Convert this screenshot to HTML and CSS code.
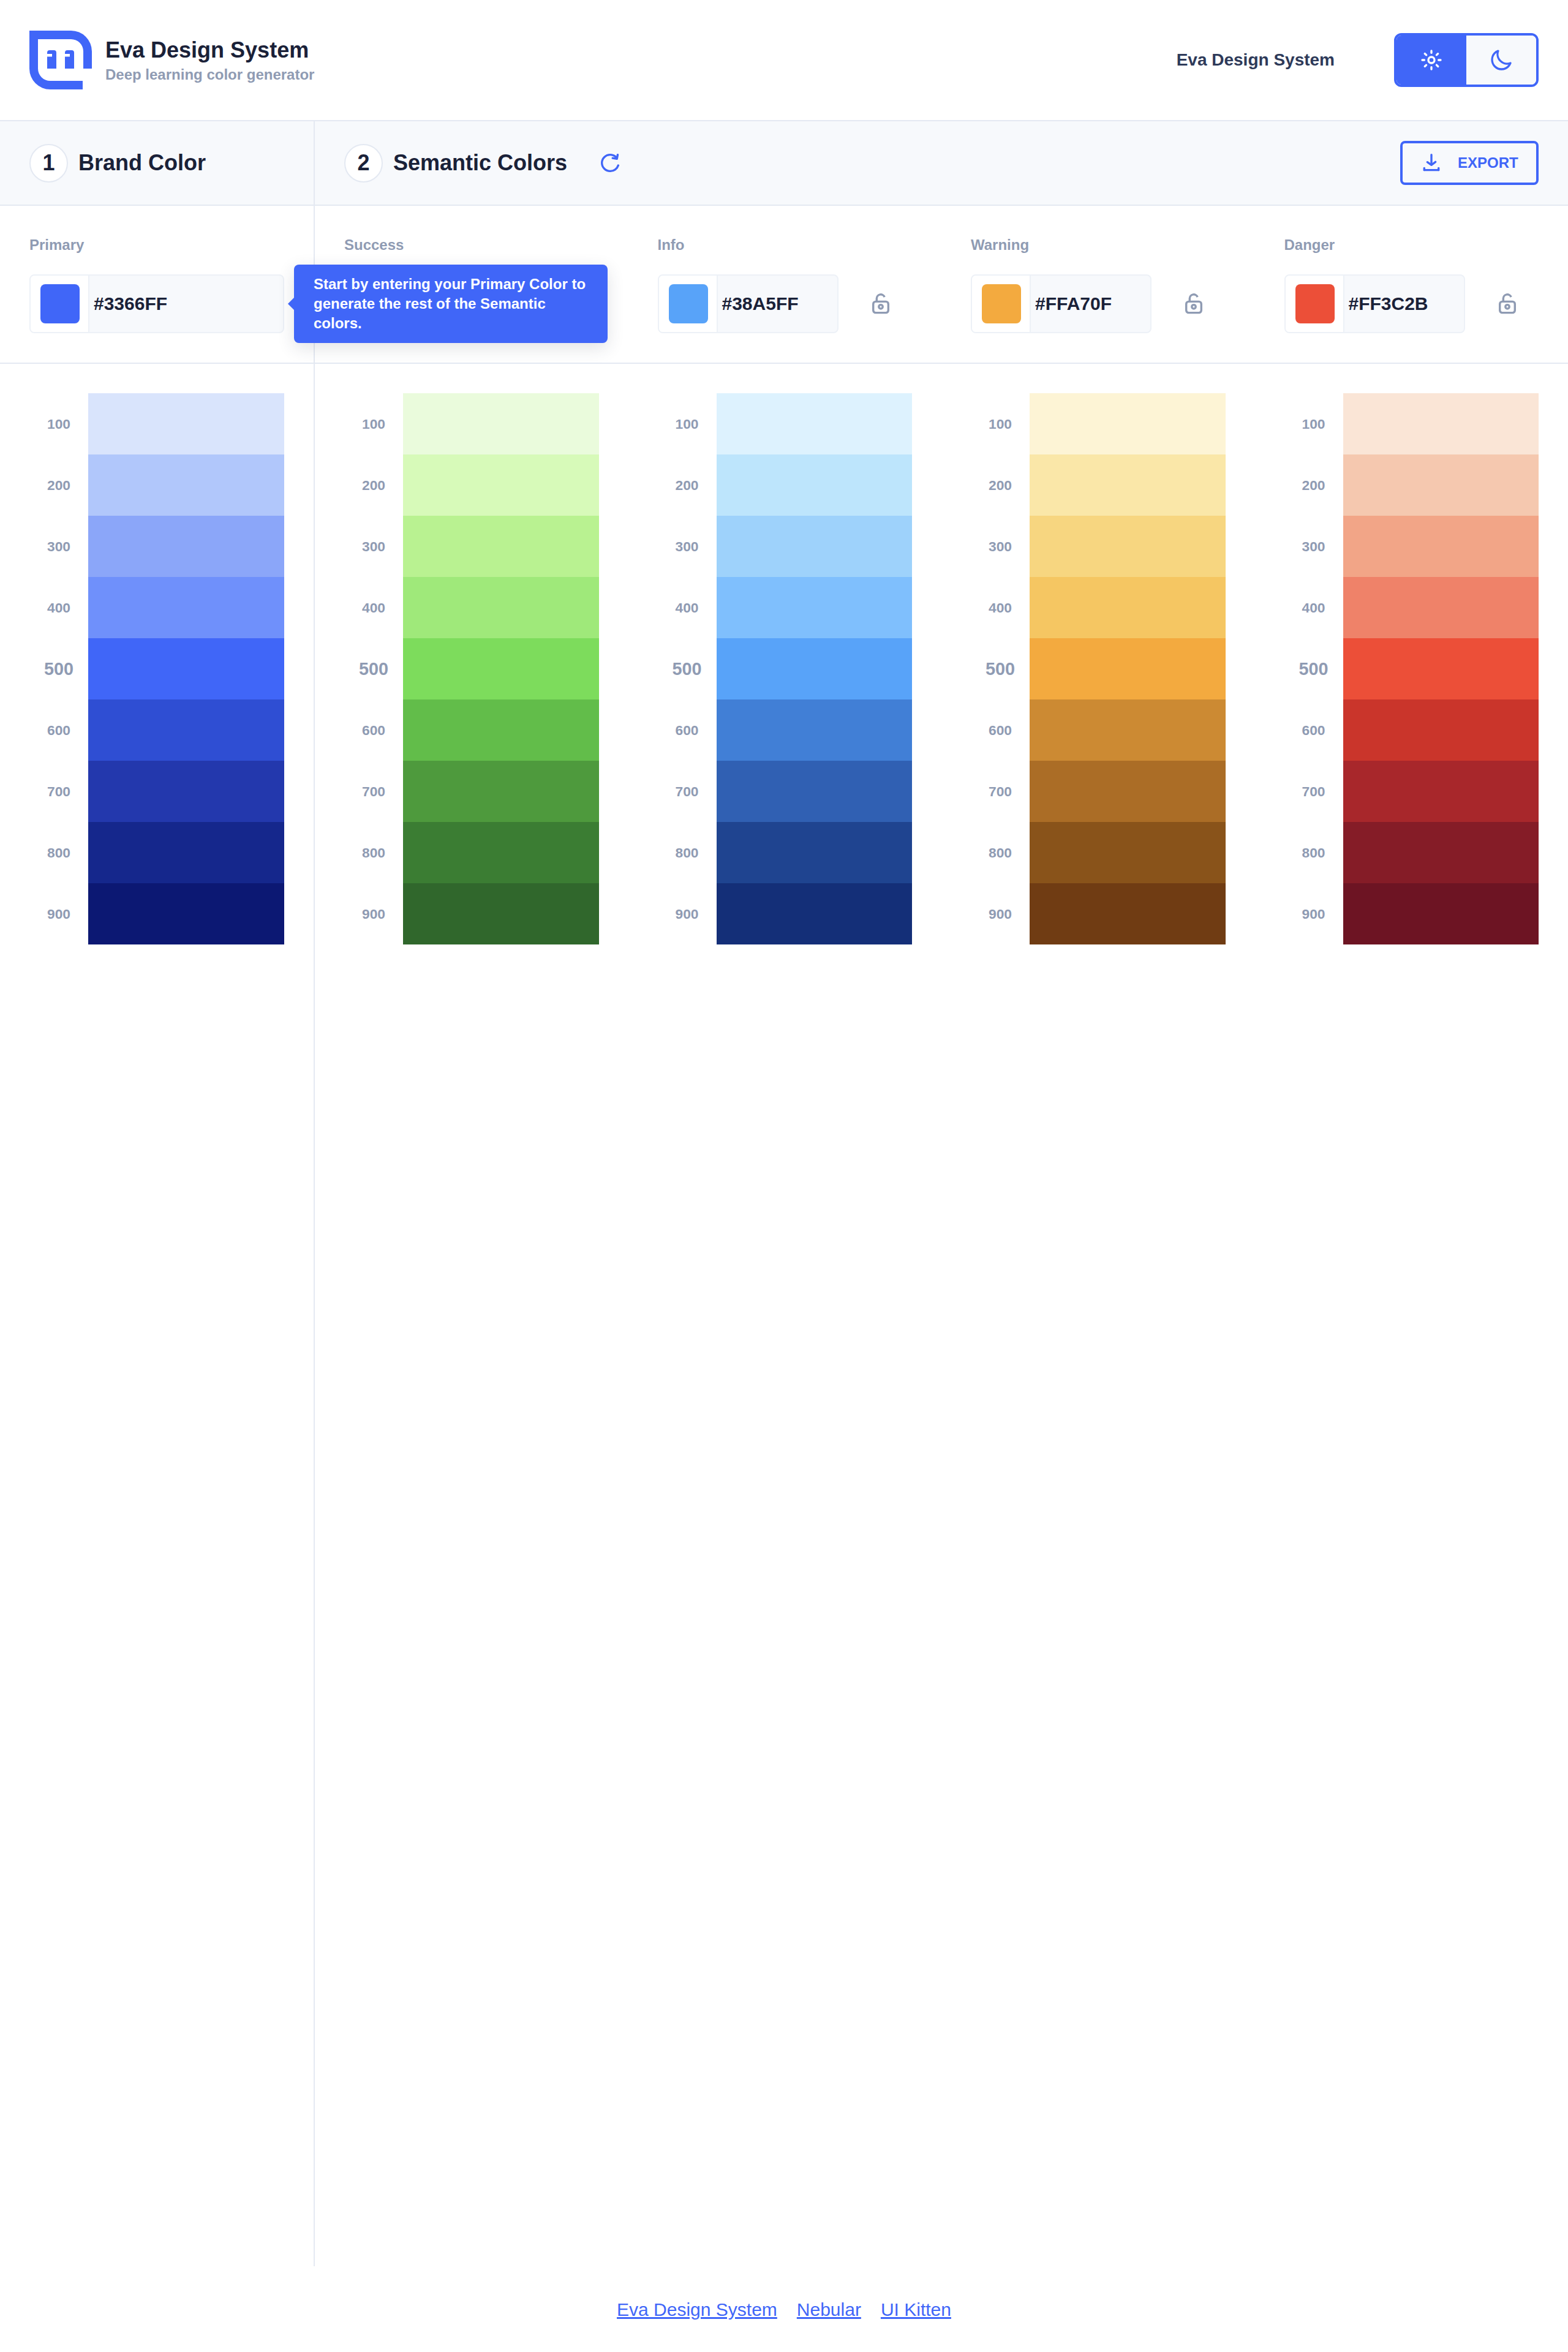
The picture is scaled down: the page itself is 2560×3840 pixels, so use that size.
FILE: index.html
```html
<!DOCTYPE html>
<html lang="en">
<head>
  <meta charset="UTF-8" />
  <meta name="viewport" content="width=device-width, initial-scale=1.0" />
  <title>Eva Design System - Colors</title>
  <link rel="stylesheet" href="styles.css">
</head>
<body>
  <header class="topbar">
    <div class="brand">
      <svg class="logo" viewBox="0 0 102 96">
        <path d="M0 0H68A34 34 0 0 1 102 34V62H88V34A20 20 0 0 0 68 14H14V62A20 20 0 0 0 34 82H87V96H34A34 34 0 0 1 0 62Z"/>
        <path d="M29 62V42.5H37V38H29V36A4 4 0 0 1 33 32H40A4 4 0 0 1 44 36V62Z"/>
        <path d="M58 62V42.5H66V38H58V36A4 4 0 0 1 62 32H69A4 4 0 0 1 73 36V62Z"/>
      </svg>
      <div class="brand-text">
        <div class="brand-name">Eva Design System</div>
        <div class="brand-sub">Deep learning color generator</div>
      </div>
    </div>
    <a class="top-link">Eva Design System</a>
    <div class="theme-toggle">
      <div class="theme-btn active">
        <svg class="icon-40" viewBox="0 0 24 24"><path d="M12 6a1 1 0 0 0 1-1V3a1 1 0 0 0-2 0v2a1 1 0 0 0 1 1z"/><path d="M21 11h-2a1 1 0 0 0 0 2h2a1 1 0 0 0 0-2z"/><path d="M6 12a1 1 0 0 0-1-1H3a1 1 0 0 0 0 2h2a1 1 0 0 0 1-1z"/><path d="M6.22 5a1 1 0 0 0-1.39 1.47l1.44 1.39a1 1 0 0 0 .73.28 1 1 0 0 0 .72-.31 1 1 0 0 0 0-1.41z"/><path d="M17 8.14a1 1 0 0 0 .69-.28l1.44-1.39A1 1 0 0 0 17.78 5l-1.44 1.42a1 1 0 0 0 0 1.41 1 1 0 0 0 .66.31z"/><path d="M12 18a1 1 0 0 0-1 1v2a1 1 0 0 0 2 0v-2a1 1 0 0 0-1-1z"/><path d="M17.73 16.14a1 1 0 0 0-1.39 1.44L17.78 19a1 1 0 0 0 .69.28 1 1 0 0 0 .72-.3 1 1 0 0 0 0-1.42z"/><path d="M6.27 16.14l-1.44 1.39a1 1 0 0 0 0 1.42 1 1 0 0 0 .72.3 1 1 0 0 0 .67-.25l1.44-1.39a1 1 0 0 0-1.39-1.44z"/><path d="M12 8a4 4 0 1 0 4 4 4 4 0 0 0-4-4zm0 6a2 2 0 1 1 2-2 2 2 0 0 1-2 2z"/></svg>
      </div>
      <div class="theme-btn">
        <svg class="icon-40" viewBox="0 0 24 24"><path d="M12.3 22h-.1a10.31 10.31 0 0 1-7.34-3.15 10.46 10.46 0 0 1-.26-14 10.13 10.13 0 0 1 4-2.74 1 1 0 0 1 1.06.22 1 1 0 0 1 .24 1 8.4 8.4 0 0 0 1.94 8.81 8.47 8.47 0 0 0 8.83 1.94 1 1 0 0 1 1.27 1.29A10.16 10.16 0 0 1 19.6 19a10.28 10.28 0 0 1-7.3 3zM7.46 4.92a7.93 7.93 0 0 0-1.37 1.22 8.44 8.44 0 0 0 .2 11.32A8.29 8.29 0 0 0 12.22 20h.08a8.34 8.34 0 0 0 6.78-3.49A10.37 10.37 0 0 1 7.46 4.92z"/></svg>
      </div>
    </div>
  </header>

  <main class="columns">
    <section class="col-brand">
      <div class="section-head">
        <span class="step">1</span>
        <h2>Brand Color</h2>
      </div>
      <div class="inputs">
        <div class="field">
          <label>Primary</label>
          <div class="color-row">
            <div class="color-input wide">
              <span class="swatch-cell"><i class="swatch c-primary"></i></span>
              <span class="hex">#3366FF</span>
            </div>
          </div>
        </div>
        <div class="tooltip">Start by entering your Primary Color to generate the rest of the Semantic colors.</div>
      </div>
      <div class="palettes">
        <div class="palette">
          <div class="shade"><span class="shade-label">100</span><div class="shade-fill p1"></div></div>
          <div class="shade"><span class="shade-label">200</span><div class="shade-fill p2"></div></div>
          <div class="shade"><span class="shade-label">300</span><div class="shade-fill p3"></div></div>
          <div class="shade"><span class="shade-label">400</span><div class="shade-fill p4"></div></div>
          <div class="shade"><span class="shade-label main">500</span><div class="shade-fill p5"></div></div>
          <div class="shade"><span class="shade-label">600</span><div class="shade-fill p6"></div></div>
          <div class="shade"><span class="shade-label">700</span><div class="shade-fill p7"></div></div>
          <div class="shade"><span class="shade-label">800</span><div class="shade-fill p8"></div></div>
          <div class="shade"><span class="shade-label">900</span><div class="shade-fill p9"></div></div>
        </div>
      </div>
    </section>

    <section class="col-semantic">
      <div class="section-head">
        <span class="step">2</span>
        <h2>Semantic Colors</h2>
        <svg class="icon-40 refresh" viewBox="0 0 24 24"><path d="M20.3 13.43a1 1 0 0 0-1.25.65A7.14 7.14 0 0 1 12.18 19 7.1 7.1 0 0 1 5 12a7.1 7.1 0 0 1 7.18-7 7.26 7.26 0 0 1 4.65 1.67l-2.17-.36a1 1 0 0 0-1.15.83 1 1 0 0 0 .83 1.15l4.24.7h.17a1 1 0 0 0 .34-.06.33.33 0 0 0 .1-.06.78.78 0 0 0 .2-.11l.09-.11c0-.05.09-.09.13-.15s0-.1.05-.14a1.34 1.34 0 0 0 .07-.18l.75-4a1 1 0 0 0-2-.38l-.27 1.45A9.21 9.21 0 0 0 12.18 3 9.1 9.1 0 0 0 3 12a9.1 9.1 0 0 0 9.18 9A9.12 9.12 0 0 0 21 14.68a1 1 0 0 0-.7-1.25z"/></svg>
        <button class="export">
          <svg class="icon-40" viewBox="0 0 24 24"><rect x="4" y="18" width="16" height="2" rx="1" ry="1"/><rect x="3" y="17" width="4" height="2" rx="1" ry="1" transform="rotate(-90 5 18)"/><rect x="17" y="17" width="4" height="2" rx="1" ry="1" transform="rotate(-90 19 18)"/><path d="M12 15a1 1 0 0 1-.58-.18l-4-2.82a1 1 0 0 1-.24-1.39 1 1 0 0 1 1.4-.24L12 12.76l3.4-2.56a1 1 0 0 1 1.2 1.6l-4 3a1 1 0 0 1-.6.2z"/><rect x="11" y="3" width="2" height="10" rx="1" ry="1"/></svg>
          EXPORT
        </button>
      </div>

      <div class="inputs grid-4">
        <div class="field">
          <label>Success</label>
          <div class="color-row">
            <div class="color-input">
              <span class="swatch-cell"><i class="swatch c-success"></i></span>
            </div>
            <svg class="lock" viewBox="0 0 28 34"><path d="M7.3 13V8.3A6.7 6.7 0 0 1 20.2 6"/><rect x="1.7" y="13.4" width="24.6" height="18.2" rx="4"/><circle cx="14" cy="21.8" r="3.2"/></svg>
          </div>
        </div>
        <div class="field">
          <label>Info</label>
          <div class="color-row">
            <div class="color-input">
              <span class="swatch-cell"><i class="swatch c-info"></i></span>
              <span class="hex">#38A5FF</span>
            </div>
            <svg class="lock" viewBox="0 0 28 34"><path d="M7.3 13V8.3A6.7 6.7 0 0 1 20.2 6"/><rect x="1.7" y="13.4" width="24.6" height="18.2" rx="4"/><circle cx="14" cy="21.8" r="3.2"/></svg>
          </div>
        </div>
        <div class="field">
          <label>Warning</label>
          <div class="color-row">
            <div class="color-input">
              <span class="swatch-cell"><i class="swatch c-warning"></i></span>
              <span class="hex">#FFA70F</span>
            </div>
            <svg class="lock" viewBox="0 0 28 34"><path d="M7.3 13V8.3A6.7 6.7 0 0 1 20.2 6"/><rect x="1.7" y="13.4" width="24.6" height="18.2" rx="4"/><circle cx="14" cy="21.8" r="3.2"/></svg>
          </div>
        </div>
        <div class="field">
          <label>Danger</label>
          <div class="color-row">
            <div class="color-input">
              <span class="swatch-cell"><i class="swatch c-danger"></i></span>
              <span class="hex">#FF3C2B</span>
            </div>
            <svg class="lock" viewBox="0 0 28 34"><path d="M7.3 13V8.3A6.7 6.7 0 0 1 20.2 6"/><rect x="1.7" y="13.4" width="24.6" height="18.2" rx="4"/><circle cx="14" cy="21.8" r="3.2"/></svg>
          </div>
        </div>
      </div>

      <div class="palettes grid-4">
        <div class="palette">
          <div class="shade"><span class="shade-label">100</span><div class="shade-fill s1"></div></div>
          <div class="shade"><span class="shade-label">200</span><div class="shade-fill s2"></div></div>
          <div class="shade"><span class="shade-label">300</span><div class="shade-fill s3"></div></div>
          <div class="shade"><span class="shade-label">400</span><div class="shade-fill s4"></div></div>
          <div class="shade"><span class="shade-label main">500</span><div class="shade-fill s5"></div></div>
          <div class="shade"><span class="shade-label">600</span><div class="shade-fill s6"></div></div>
          <div class="shade"><span class="shade-label">700</span><div class="shade-fill s7"></div></div>
          <div class="shade"><span class="shade-label">800</span><div class="shade-fill s8"></div></div>
          <div class="shade"><span class="shade-label">900</span><div class="shade-fill s9"></div></div>
        </div>
        <div class="palette">
          <div class="shade"><span class="shade-label">100</span><div class="shade-fill i1"></div></div>
          <div class="shade"><span class="shade-label">200</span><div class="shade-fill i2"></div></div>
          <div class="shade"><span class="shade-label">300</span><div class="shade-fill i3"></div></div>
          <div class="shade"><span class="shade-label">400</span><div class="shade-fill i4"></div></div>
          <div class="shade"><span class="shade-label main">500</span><div class="shade-fill i5"></div></div>
          <div class="shade"><span class="shade-label">600</span><div class="shade-fill i6"></div></div>
          <div class="shade"><span class="shade-label">700</span><div class="shade-fill i7"></div></div>
          <div class="shade"><span class="shade-label">800</span><div class="shade-fill i8"></div></div>
          <div class="shade"><span class="shade-label">900</span><div class="shade-fill i9"></div></div>
        </div>
        <div class="palette">
          <div class="shade"><span class="shade-label">100</span><div class="shade-fill w1"></div></div>
          <div class="shade"><span class="shade-label">200</span><div class="shade-fill w2"></div></div>
          <div class="shade"><span class="shade-label">300</span><div class="shade-fill w3"></div></div>
          <div class="shade"><span class="shade-label">400</span><div class="shade-fill w4"></div></div>
          <div class="shade"><span class="shade-label main">500</span><div class="shade-fill w5"></div></div>
          <div class="shade"><span class="shade-label">600</span><div class="shade-fill w6"></div></div>
          <div class="shade"><span class="shade-label">700</span><div class="shade-fill w7"></div></div>
          <div class="shade"><span class="shade-label">800</span><div class="shade-fill w8"></div></div>
          <div class="shade"><span class="shade-label">900</span><div class="shade-fill w9"></div></div>
        </div>
        <div class="palette">
          <div class="shade"><span class="shade-label">100</span><div class="shade-fill d1"></div></div>
          <div class="shade"><span class="shade-label">200</span><div class="shade-fill d2"></div></div>
          <div class="shade"><span class="shade-label">300</span><div class="shade-fill d3"></div></div>
          <div class="shade"><span class="shade-label">400</span><div class="shade-fill d4"></div></div>
          <div class="shade"><span class="shade-label main">500</span><div class="shade-fill d5"></div></div>
          <div class="shade"><span class="shade-label">600</span><div class="shade-fill d6"></div></div>
          <div class="shade"><span class="shade-label">700</span><div class="shade-fill d7"></div></div>
          <div class="shade"><span class="shade-label">800</span><div class="shade-fill d8"></div></div>
          <div class="shade"><span class="shade-label">900</span><div class="shade-fill d9"></div></div>
        </div>
      </div>
    </section>
  </main>

  <footer class="footer">
    <a href="#">Eva Design System</a>
    <a href="#">Nebular</a>
    <a href="#">UI Kitten</a>
  </footer>
</body>
</html>
```

FILE: styles.css
```css
:root {
  --blue: #4066f8;
  --line: #e4e9f2;
  --bg-soft: #f7f9fc;
  --text-dark: #1a2138;
  --text-hint: #8f9bb3;
}

* {
  margin: 0;
  padding: 0;
  box-sizing: border-box;
}

body {
  background: #fff;
  color: var(--text-dark);
  font-family: "Liberation Sans", Arial, sans-serif;
  font-weight: 700;
}

/* Top bar */
.topbar {
  height: 198px;
  padding: 0 48px;
  border-bottom: 2px solid var(--line);
  display: flex;
  align-items: center;
}

.brand {
  display: flex;
  align-items: center;
  gap: 22px;
  flex: 1;
}

.logo {
  width: 102px;
  height: 96px;
  fill: var(--blue);
}

.brand-text {
  padding-top: 2px;
}

.brand-name {
  font-size: 36px;
  line-height: 42px;
  margin-bottom: 4px;
}

.brand-sub {
  font-size: 24px;
  line-height: 30px;
  color: var(--text-hint);
}

.top-link {
  font-size: 28px;
  color: #2e3a59;
  margin-right: 97px;
}

.theme-toggle {
  width: 236px;
  height: 88px;
  border: 4px solid var(--blue);
  border-radius: 12px;
  display: flex;
  overflow: hidden;
}

.theme-btn {
  width: 116px;
  display: flex;
  align-items: center;
  justify-content: center;
  background: var(--bg-soft);
  fill: var(--blue);
}

.theme-btn.active {
  background: var(--blue);
  fill: #fff;
}

.icon-40 {
  width: 40px;
  height: 40px;
  flex: none;
}

/* Two main columns */
.columns {
  display: flex;
  min-height: 3502px;
}

.col-brand {
  width: 514px;
  flex: none;
  border-right: 2px solid var(--line);
}

.col-semantic {
  flex: 1;
  min-width: 0;
}

.section-head {
  height: 138px;
  padding: 0 48px;
  background: var(--bg-soft);
  border-bottom: 2px solid var(--line);
  display: flex;
  align-items: center;
}

.step {
  width: 63px;
  height: 63px;
  border: 2px solid var(--line);
  border-radius: 50%;
  background: #fff;
  font-size: 36px;
  display: flex;
  align-items: center;
  justify-content: center;
  margin-right: 17px;
}

h2 {
  font-size: 36px;
  font-weight: 700;
}

.refresh {
  margin-left: 50px;
  fill: var(--blue);
}

.export {
  margin-left: auto;
  width: 226px;
  height: 72px;
  background: none;
  border: 4px solid var(--blue);
  border-radius: 8px;
  color: var(--blue);
  fill: var(--blue);
  font-family: inherit;
  font-size: 24px;
  font-weight: 700;
  display: flex;
  align-items: center;
  gap: 23px;
  padding-left: 27px;
}

/* Inputs row */
.inputs {
  position: relative;
  height: 258px;
  padding: 49px 48px 48px;
  border-bottom: 2px solid var(--line);
}

.grid-4 {
  display: grid;
  grid-template-columns: repeat(4, 1fr);
  column-gap: 96px;
}

label {
  display: block;
  font-size: 24px;
  line-height: 30px;
  margin-bottom: 33px;
  color: var(--text-hint);
}

.color-row {
  display: flex;
  align-items: center;
}

.color-input {
  width: 295px;
  height: 96px;
  border: 2px solid #edf1f7;
  border-radius: 8px;
  background: var(--bg-soft);
  display: flex;
  align-items: center;
  overflow: hidden;
}

.color-input.wide {
  width: 416px;
}

.swatch-cell {
  width: 96px;
  height: 100%;
  background: #fff;
  border-right: 2px solid #edf1f7;
  display: flex;
  align-items: center;
  padding-left: 16px;
}

.swatch {
  width: 64px;
  height: 64px;
  border-radius: 8px;
}

.hex {
  font-size: 30px;
  margin-left: 7px;
}

.lock {
  width: 28px;
  height: 34px;
  margin-left: 55px;
  fill: none;
  stroke: var(--text-hint);
  stroke-width: 3.4;
}

.c-primary { background: #4066f8; }
.c-success { background: #7ddc5c; }
.c-info { background: #58a3f9; }
.c-warning { background: #f3aa3f; }
.c-danger { background: #ec4f38; }

/* Tooltip over the first semantic column */
.tooltip {
  position: absolute;
  left: 480px;
  top: 96px;
  z-index: 5;
  width: 512px;
  height: 128px;
  padding: 16px 32px;
  background: var(--blue);
  border-radius: 8px;
  color: #fff;
  font-size: 24px;
  line-height: 32px;
  box-shadow: 0 8px 28px rgba(44, 51, 73, 0.14);
}

.tooltip::before {
  content: "";
  position: absolute;
  left: -10px;
  top: 54px;
  border-top: 10px solid transparent;
  border-bottom: 10px solid transparent;
  border-right: 10px solid var(--blue);
}

/* Colour scales */
.palettes {
  padding: 48px 48px 0;
}

.shade {
  height: 100px;
  display: flex;
  align-items: center;
}

.shade-label {
  width: 96px;
  text-align: center;
  font-size: 22.8px;
  color: var(--text-hint);
}

.shade-label.main {
  font-size: 28.8px;
}

.shade-fill {
  flex: 1;
  height: 100%;
}

.p1 { background: #d9e4fc; }
.p2 { background: #b1c7fb; }
.p3 { background: #8ba6f9; }
.p4 { background: #6f90fb; }
.p5 { background: #4066f8; }
.p6 { background: #2f4ed3; }
.p7 { background: #2338ad; }
.p8 { background: #15278c; }
.p9 { background: #0c1873; }

.s1 { background: #eafbdc; }
.s2 { background: #d7fab9; }
.s3 { background: #b9f291; }
.s4 { background: #9fe97a; }
.s5 { background: #7ddc5c; }
.s6 { background: #62bd4a; }
.s7 { background: #4e9a3d; }
.s8 { background: #3b7d33; }
.s9 { background: #30672c; }

.i1 { background: #ddf2fe; }
.i2 { background: #bde5fc; }
.i3 { background: #9ed2fb; }
.i4 { background: #7fbffd; }
.i5 { background: #58a3f9; }
.i6 { background: #417fd6; }
.i7 { background: #3060b3; }
.i8 { background: #1f4490; }
.i9 { background: #142f78; }

.w1 { background: #fdf4d5; }
.w2 { background: #fae7a8; }
.w3 { background: #f7d680; }
.w4 { background: #f5c662; }
.w5 { background: #f3aa3f; }
.w6 { background: #cc8a33; }
.w7 { background: #ab6d26; }
.w8 { background: #89531a; }
.w9 { background: #703c13; }

.d1 { background: #fae5d6; }
.d2 { background: #f5c8af; }
.d3 { background: #f2a587; }
.d4 { background: #ef8269; }
.d5 { background: #ec4f38; }
.d6 { background: #ca352b; }
.d7 { background: #a8272b; }
.d8 { background: #851c27; }
.d9 { background: #6d1423; }

/* Footer links */
.footer {
  height: 140px;
  display: flex;
  justify-content: center;
  gap: 32px;
  padding-top: 54px;
  font-size: 30px;
  font-weight: 400;
}

.footer a {
  color: var(--blue);
  line-height: 34px;
  text-decoration-thickness: 3px;
}
```
